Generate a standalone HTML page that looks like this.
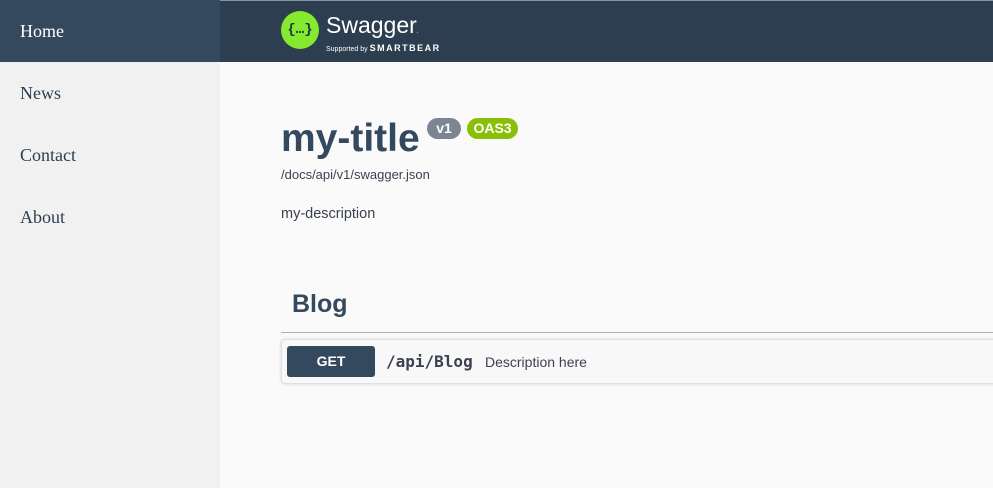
<!DOCTYPE html>
<html><head><meta charset="utf-8"><style>
*{margin:0;padding:0;box-sizing:border-box}
body{width:993px;height:488px;overflow:hidden;background:#fafafa;position:relative;font-family:"Liberation Sans",sans-serif}
.side{position:absolute;left:0;top:0;width:220px;height:488px;background:#f1f1f1}
.side div{height:62px;line-height:62px;padding-left:20px;font-family:"Liberation Serif",serif;font-size:18px;color:#2c3e50}
.side div.act{background:#34495e;color:#fff}
.top{position:absolute;left:220px;top:0;width:773px;height:62px;background:#2c3e50;border-top:1px solid #8a949e}
.logo{position:absolute;left:61px;top:10px;width:38px;height:38px;border-radius:50%;background:#85ea2d;color:#173647;font:bold 14px "Liberation Mono",monospace;text-align:center;line-height:38px}
.sw{position:absolute;left:106px;top:11px;color:#fff;font-size:23px}
.sb{position:absolute;left:106px;top:42px;color:#fff;font-size:7px}
.sb b{font-size:9px;letter-spacing:1.5px}
h1{position:absolute;left:281px;top:117px;font-size:39px;color:#34495e;font-weight:bold}
.badge{position:absolute;top:118px;height:21px;border-radius:11px;color:#fff;font:bold 14px "Liberation Sans",sans-serif;line-height:21px;text-align:center}
.url{position:absolute;left:281px;top:167px;font-size:13px;color:#3b4151}
.desc{position:absolute;left:281px;top:206px;font-size:14.5px;color:#3b4151}
.blog{position:absolute;left:292px;top:290px;font-size:25px;font-weight:bold;color:#34495e}
.line{position:absolute;left:281px;top:332px;width:712px;height:1px;background:#aab0ba}
.op{position:absolute;left:281px;top:339px;width:720px;height:45px;border:1px solid #e0e0e0;border-radius:4px;background:#f8f8f8;box-shadow:0 0 3px rgba(0,0,0,.15)}
.get{position:absolute;left:5px;top:6px;width:88px;height:31px;background:#34495e;border-radius:3px;color:#fff;font-weight:bold;font-size:14px;text-align:center;line-height:31px}
.path{position:absolute;left:104px;top:12px;font:bold 16px "DejaVu Sans Mono",monospace;color:#3b4151}
.pd{position:absolute;left:203px;top:14px;font-size:14px;color:#3b4151}
</style></head><body>
<div class="side"><div class="act">Home</div><div>News</div><div>Contact</div><div>About</div></div>
<div class="top"><div class="logo">{…}</div><div class="sw">Swagger<span style="font-size:6px">.</span></div><div class="sb">Supported by <b>SMARTBEAR</b></div></div>
<h1>my-title</h1>
<div class="badge" style="left:427px;width:34px;background:#7d8492">v1</div>
<div class="badge" style="left:467px;width:51px;background:#89bf04">OAS3</div>
<div class="url">/docs/api/v1/swagger.json</div>
<div class="desc">my-description</div>
<div class="blog">Blog</div>
<div class="line"></div>
<div class="op"><div class="get">GET</div><div class="path">/api/Blog</div><div class="pd">Description here</div></div>
</body></html>
